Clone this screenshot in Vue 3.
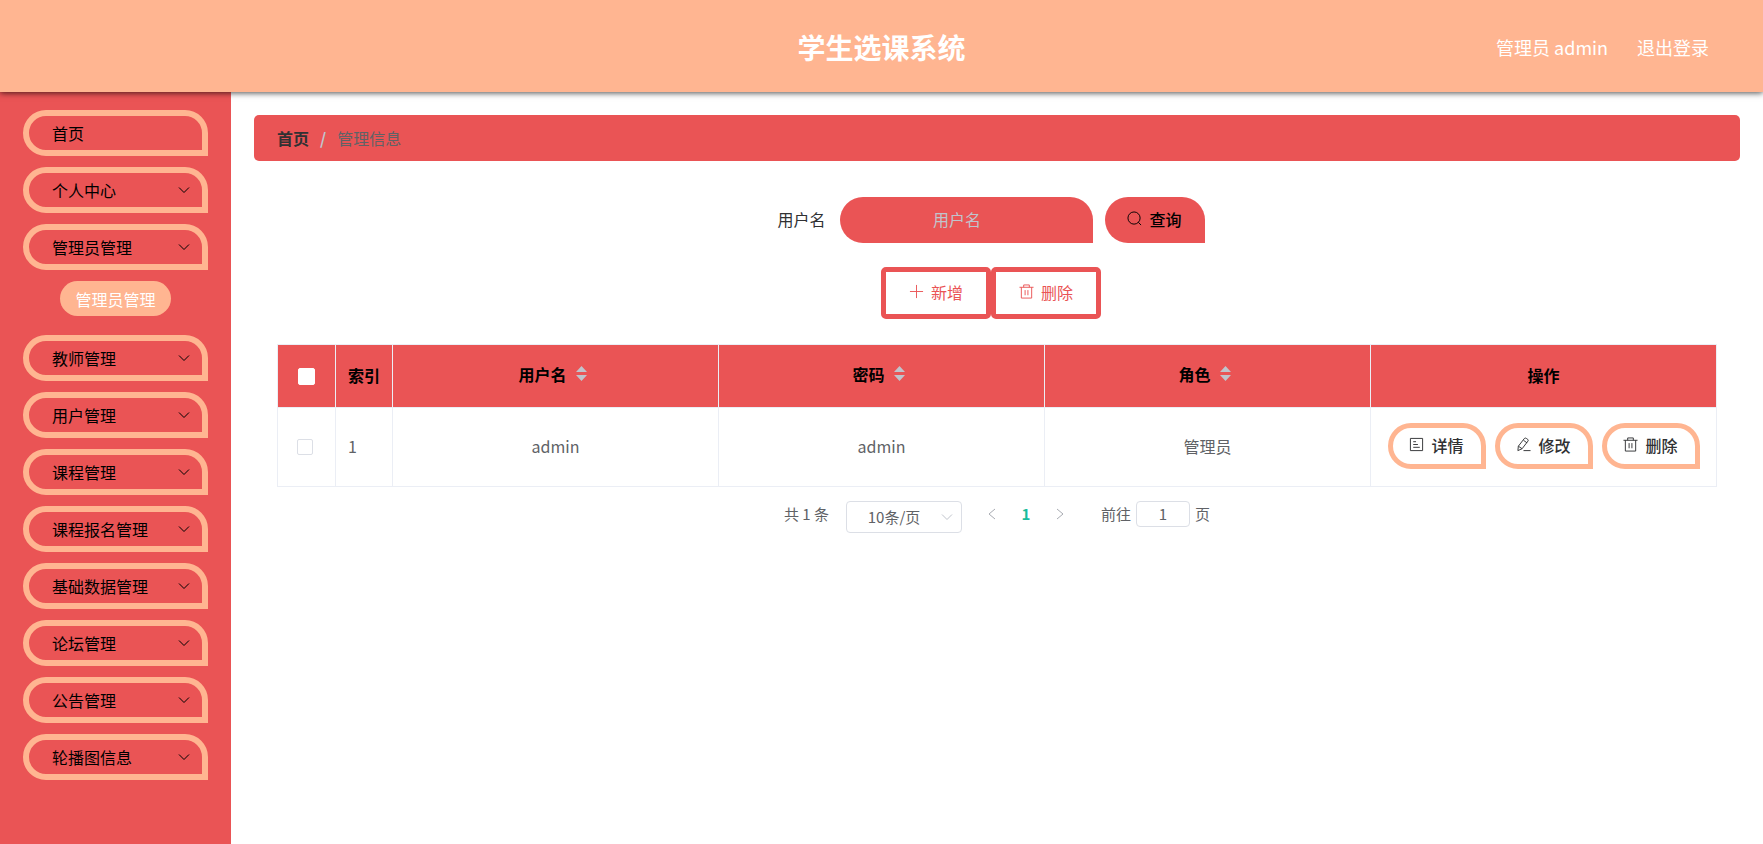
<script setup>
import { ref } from 'vue'

const menuTop = ['首页', '个人中心', '管理员管理']
const menuRest = ['教师管理', '用户管理', '课程管理', '课程报名管理', '基础数据管理', '论坛管理', '公告管理', '轮播图信息']
const username = ref('')
const page = ref('1')
const columns = ['用户名', '密码', '角色']
const rows = [{ id: 1, cells: ['admin', 'admin', '管理员'] }]
const icons = {
  detail: 'M1.5 1.500h13v13h-13z M4.500 5h3 M4.500 8h5 M4.500 11h7',
  edit: 'M9 1.500q1-.8 2 0l1.500 1q1 .8.3 1.800L6.500 12.500 2 14.500 2.500 9.800z M8 3.500l3.800 2.800 M2.500 9.800l4 2.700 M8 14.500h7.500',
  trash: 'M.5 3.500h15 M5 3.500v-2.500h6v2.500 M2.500 3.500v11.500h11v-11.500 M6.500 6.500v5.500 M9.500 6.500v5.500',
}
const actions = [
  { label: '详情', icon: icons.detail },
  { label: '修改', icon: icons.edit },
  { label: '删除', icon: icons.trash },
]
</script>

<template>
  <div class="page">
    <header class="header">
      <h1>学生选课系统</h1>
      <div class="account">
        <span>管理员 admin</span>
        <a href="#">退出登录</a>
      </div>
    </header>
    <div class="body">
      <nav class="sidebar">
        <button v-for="(m, i) in menuTop" :key="m" class="menu-item" type="button">
          <span>{{ m }}</span>
          <svg v-if="i > 0" class="chevron" viewBox="0 0 12 12"><path d="M1 3.500l5 5 5-5" /></svg>
        </button>
        <a class="submenu" href="#">管理员管理</a>
        <button v-for="m in menuRest" :key="m" class="menu-item" type="button">
          <span>{{ m }}</span>
          <svg class="chevron" viewBox="0 0 12 12"><path d="M1 3.500l5 5 5-5" /></svg>
        </button>
      </nav>
      <main class="main">
        <div class="crumbs">
          <a href="#">首页</a><span class="slash">/</span><span class="current">管理信息</span>
        </div>
        <div class="content">
          <form class="search" @submit.prevent>
            <label for="username">用户名</label>
            <input id="username" v-model="username" type="text" placeholder="用户名">
            <button type="submit">
              <svg class="icon" viewBox="0 0 16 16"><circle cx="7.500" cy="7.500" r="6.500" /><path d="M12 12l3 3" /></svg>
              <span>查询</span>
            </button>
          </form>
          <div class="tools">
            <button type="button">
              <svg class="icon" viewBox="0 0 16 16"><path d="M8 1v14M1 8h14" /></svg>
              <span>新增</span>
            </button>
            <button type="button">
              <svg class="icon" viewBox="0 0 16 16"><path :d="icons.trash" /></svg>
              <span>删除</span>
            </button>
          </div>
          <table class="grid">
            <colgroup>
              <col class="c-check"><col class="c-index"><col><col><col><col class="c-actions">
            </colgroup>
            <thead>
              <tr>
                <th class="check"><input type="checkbox" aria-label="全选"></th>
                <th class="index">索引</th>
                <th v-for="c in columns" :key="c" class="sort-cell">
                  <span class="sortable">
                    {{ c }}
                    <svg class="carets" viewBox="0 0 11 15"><path d="M5.500 0L11 6H0zM0 9h11l-5.500 6z" /></svg>
                  </span>
                </th>
                <th>操作</th>
              </tr>
            </thead>
            <tbody>
              <tr v-for="r in rows" :key="r.id">
                <td class="check"><input type="checkbox" aria-label="选择"></td>
                <td class="index">{{ r.id }}</td>
                <td v-for="(c, i) in r.cells" :key="i">{{ c }}</td>
                <td>
                  <div class="actions">
                    <button v-for="a in actions" :key="a.label" type="button">
                      <svg class="icon" viewBox="0 0 16 16"><path :d="a.icon" /></svg>
                      <span>{{ a.label }}</span>
                    </button>
                  </div>
                </td>
              </tr>
            </tbody>
          </table>
          <div class="pager">
            <span class="total">共 1 条</span>
            <div class="size">
              <select aria-label="每页条数"><option>10条/页</option></select>
              <svg class="chevron" viewBox="0 0 12 12"><path d="M1 3.500l5 5 5-5" /></svg>
            </div>
            <button type="button" aria-label="上一页"><svg viewBox="0 0 12 12"><path d="M9 1l-6 5 6 5" /></svg></button>
            <button type="button" class="active">1</button>
            <button type="button" aria-label="下一页"><svg viewBox="0 0 12 12"><path d="M3 1l6 5-6 5" /></svg></button>
            <label class="jump">前往<input v-model="page" type="text">页</label>
          </div>
        </div>
      </main>
    </div>
  </div>
</template>

<style>
body { margin: 0; }
</style>

<style scoped>
.page {
  display: flex;
  flex-direction: column;
  min-height: 100vh;
  background: #fff;
  color: #606266;
  font: 16px/24px "Noto Sans CJK SC", "Noto Sans", sans-serif;
}
.page * { box-sizing: border-box; }
button, input, select { font: inherit; color: inherit; margin: 0; }
button { cursor: pointer; }
a { color: inherit; text-decoration: none; }
svg { flex: none; fill: none; stroke: currentColor; }

.header {
  position: relative;
  display: grid;
  grid-template-columns: 1fr auto 1fr;
  align-items: center;
  height: 92px;
  padding: 1px 54px 0;
  background: #ffb591;
  box-shadow: 0 1px 6px rgba(0, 0, 0, .7);
  color: #fff;
}
h1 { grid-column: 2; margin: 0; font-size: 28px; line-height: 40px; }
.account { display: flex; justify-content: flex-end; gap: 29px; font-size: 18px; }

.body { display: flex; flex: 1; }
.sidebar {
  display: flex;
  flex-direction: column;
  gap: 11px;
  width: 231px;
  padding: 18px 23px;
  background: #ea5455;
}
.menu-item {
  display: flex;
  align-items: center;
  justify-content: space-between;
  height: 46px;
  padding: 0 12px 1px 23px;
  border: 6px solid #ffb591;
  border-radius: 23px 23px 0 23px;
  background: transparent;
  color: #000;
}
.chevron { width: 12px; height: 12px; }
.submenu {
  align-self: center;
  margin-bottom: 8px;
  padding: 6px 15px 5px;
  border-radius: 18px;
  background: #ffb591;
  color: #fff;
}

.main { flex: 1; min-width: 0; padding: 23px; }
.crumbs {
  display: flex;
  align-items: center;
  height: 46px;
  padding: 0 23px;
  border-radius: 5px;
  background: #ea5455;
}
.crumbs a { color: #303133; font-weight: 700; }
.slash { margin: 0 11px; color: #c0c4cc; font-weight: 700; }
.content { padding: 36px 23px 0; }

.search { display: flex; align-items: center; justify-content: center; padding-right: 12px; }
.search label { margin-right: 14px; padding-bottom: 2px; color: #303133; }
.search input {
  width: 253px;
  height: 46px;
  margin-right: 12px;
  padding: 0 34px 3px 16px;
  border: 0;
  border-radius: 23px 23px 0 23px;
  background: #ea5455;
  color: #c0c4cc;
  text-align: center;
}
.search input::placeholder { color: #c0c4cc; opacity: 1; }
.search button, .tools button, .actions button {
  display: flex;
  align-items: center;
  justify-content: center;
  gap: 7px;
  padding: 0 0 3px;
}
.icon { width: 15px; height: 15px; }
.search button {
  width: 100px;
  height: 46px;
  border: 0;
  border-radius: 23px 23px 0 23px;
  background: #ea5455;
  color: #000;
  font-weight: 500;
}
.tools { display: flex; justify-content: center; margin: 24px 0 25px; padding-right: 12px; }
.tools button {
  width: 110px;
  height: 52px;
  border: 5px solid #ea5455;
  border-radius: 5px;
  background: #fff;
  color: #ea5455;
}

.grid {
  width: 100%;
  table-layout: fixed;
  border-collapse: collapse;
  text-align: center;
}
.c-check { width: 58px; }
.c-index { width: 57px; }
.c-actions { width: 346px; }
th, td { padding: 0 0 2px; border: 1px solid #ebeef5; }
th { height: 63px; background: #ea5455; color: #000; font-weight: 700; }
td { height: 79px; }
.index { padding-left: 12px; text-align: left; }
.sort-cell { padding: 0 6px 5px 0; }
.check { padding: 0; }
td.check { padding-right: 4px; }
.check input {
  display: block;
  width: 16px;
  height: 16px;
  margin: 0 auto;
  appearance: none;
  border: 1px solid #dcdfe6;
  border-radius: 2px;
  background: #fff;
}
th.check input { width: 17px; height: 17px; border-color: #fff; }
.sortable { display: inline-flex; align-items: center; gap: 9px; }
.carets { width: 11px; height: 15px; fill: #c0c4cc; stroke: none; }
.actions { display: flex; justify-content: center; gap: 9px; }
.actions button {
  width: 98px;
  height: 46px;
  border: 5px solid #ffb591;
  border-radius: 23px 23px 0 23px;
  background: #fff;
  color: #303133;
  font-weight: 500;
}

.pager {
  display: flex;
  align-items: flex-start;
  justify-content: center;
  margin-top: 14px;
  font-size: 15px;
  line-height: 26px;
}
.size { position: relative; width: 116px; margin: 0 13px 0 17px; }
.size select {
  width: 100%;
  height: 32px;
  padding: 0 20px 0 0;
  appearance: none;
  border: 1px solid #dcdfe6;
  border-radius: 4px;
  background: #fff;
  text-align: center;
}
.size .chevron { position: absolute; right: 9px; top: 10px; color: #c0c4cc; }
.pager button {
  display: flex;
  align-items: center;
  justify-content: center;
  width: 34px;
  height: 26px;
  padding: 0;
  border: 0;
  background: none;
  color: #a8abb2;
}
.pager button svg { width: 12px; height: 12px; }
.pager .active { color: #18bc9c; font-weight: 700; }
.jump { display: flex; align-items: center; gap: 5px; margin-left: 24px; }
.jump input {
  width: 54px;
  height: 26px;
  padding: 0;
  border: 1px solid #dcdfe6;
  border-radius: 4px;
  background: #fff;
  text-align: center;
}
</style>
